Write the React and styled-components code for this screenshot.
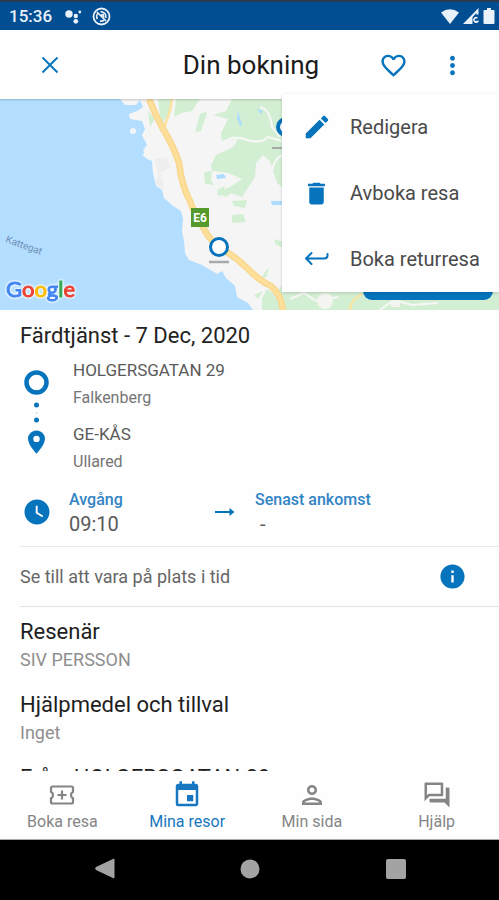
import React from "react";
import styled, { createGlobalStyle } from "styled-components";
import {
  MdEdit,
  MdDelete,
  MdFavoriteBorder,
  MdMoreVert,
  MdInfo,
  MdWatchLater,
  MdEvent,
  MdOutlinePerson,
  MdOutlineQuestionAnswer,
} from "react-icons/md";

const blue = "#0673bd";

const GlobalStyle = createGlobalStyle`
  * { box-sizing: border-box; }
  body { margin: 0; background: #fefefe; font-family: Roboto, "Noto Sans", sans-serif; }
  h1, h2, h3, p, dl, dd, dt, ul, ol { margin: 0; padding: 0; }
  ul, ol { list-style: none; }
  button { border: 0; padding: 0; background: none; font: inherit; color: inherit; cursor: pointer; }
  svg { display: block; }
`;

const Screen = styled.div`
  display: flex;
  flex-direction: column;
  height: 100vh;
  background: #fefefe;
  color: #222;
`;

const StatusBar = styled.div`
  flex: none;
  display: flex;
  align-items: center;
  gap: 13px;
  height: 30px;
  padding: 0 4px 0 9px;
  border-top: 2px solid #2b3a50;
  background: #024e93;
  color: #e9f1fa;
`;

const Clock = styled.time`
  font-size: 17px;
  font-weight: 500;
`;

const StatusIcons = styled.div`
  display: flex;
  align-items: center;
  gap: ${(p) => p.$gap}px;
  margin-left: ${(p) => (p.$end ? "auto" : "0")};
`;

const AppBar = styled.header`
  flex: none;
  position: relative;
  z-index: 2;
  display: grid;
  grid-template-columns: 1fr auto 1fr;
  align-items: center;
  height: 69px;
  padding: 1px 27px 0 30px;
  background: #fefefe;
  box-shadow: 0 1px 2px rgba(0, 0, 0, 0.2);
`;

const Title = styled.h1`
  font-size: 26px;
  line-height: 32px;
  font-weight: 400;
  color: #1b1b1b;
`;

const BarActions = styled.div`
  display: flex;
  justify-content: flex-end;
  gap: 19px;
`;

const IconButton = styled.button`
  display: grid;
  place-items: center;
  width: 40px;
  height: 40px;
  color: ${blue};
`;

const Menu = styled.ul`
  position: absolute;
  top: 64px;
  right: 0;
  width: 217px;
  background: #fefefe;
  box-shadow: 0 1px 3px rgba(0, 0, 0, 0.16);
`;

const MenuItem = styled.button`
  display: grid;
  grid-template-columns: 35px 1fr;
  align-items: center;
  gap: 16px;
  width: 100%;
  height: 66px;
  padding-left: 17px;
  font-size: 20px;
  text-align: left;
  white-space: nowrap;
  color: #4a4a4a;

  svg {
    justify-self: center;
    color: ${blue};
  }
`;

const Content = styled.main`
  flex: 1;
  min-height: 0;
  overflow: hidden;
`;

const MapPanel = styled.section`
  position: relative;
  height: 211px;
  overflow: hidden;
  background: #f5f5f5;
`;

const MapArt = styled.svg`
  width: 100%;
  height: 100%;
`;

const MapLogo = styled.div`
  position: absolute;
  left: 6px;
  bottom: 6px;
  font-family: Lato, sans-serif;
  font-size: 22px;
  line-height: 30px;
  font-weight: 400;
  -webkit-text-stroke: 1px currentColor;
  filter: drop-shadow(0 0 1px #fff) drop-shadow(0 0 1px #fff);
`;

const Letter = styled.span`
  color: ${(p) => p.$color};
`;

const MapButton = styled.button`
  position: absolute;
  right: 6px;
  bottom: 10px;
  width: 130px;
  height: 40px;
  border-radius: 9px;
  background: ${blue};
`;

const Details = styled.div`
  padding: 12px 0 0 20px;
`;

const TripTitle = styled.h2`
  font-size: 22px;
  line-height: 28px;
  font-weight: 400;
  color: #222;
`;

const Route = styled.div`
  display: grid;
  grid-template-columns: 33px 1fr;
  column-gap: 20px;
  padding-top: 7px;
`;

const RouteMarks = styled.div`
  display: flex;
  flex-direction: column;
  align-items: center;
  padding-top: 13px;
  color: ${blue};
`;

const Stops = styled.ol`
  display: grid;
  gap: 10px;
`;

const Street = styled.p`
  font-size: 17px;
  line-height: 27px;
  color: #5a5a5a;
`;

const Town = styled.p`
  font-size: 16px;
  line-height: 27px;
  color: #757575;
`;

const Times = styled.div`
  display: grid;
  grid-template-columns: 33px 130px 24px 1fr;
  align-items: center;
  padding: 13px 0 10px;
  column-gap: 16px;
  border-bottom: 1px solid #e9e9e9;
  color: ${blue};
`;

const ClockMark = styled(MdWatchLater)`
  justify-self: center;
`;

const TimeLabel = styled.dt`
  font-size: 16px;
  line-height: 24px;
  font-weight: 500;
  color: #3284c4;
`;

const TimeValue = styled.dd`
  font-size: 20px;
  line-height: 24px;
  color: #5a5a5a;
  padding-left: ${(p) => (p.$empty ? 5 : 0)}px;
`;

const Notice = styled.div`
  display: flex;
  align-items: center;
  justify-content: space-between;
  height: 60px;
  padding-right: 27px;
  border-bottom: 1px solid #e4e4e4;
  font-size: 18px;
  color: #666;
`;

const Facts = styled.div`
  display: grid;
  gap: 18px;
  padding-top: 11px;
`;

const FactTitle = styled.h3`
  font-size: 22px;
  line-height: 28px;
  font-weight: 400;
  color: #1e1e1e;
`;

const FactText = styled.p`
  font-size: 18px;
  line-height: 27px;
  color: #8f8f8f;
`;

const TabBar = styled.nav`
  flex: none;
  display: grid;
  grid-template-columns: repeat(4, 1fr);
  height: 69px;
  background: #fefefe;
  border-bottom: 1px solid #aaa;
`;

const Tab = styled.button`
  display: flex;
  flex-direction: column;
  align-items: center;
  gap: 2px;
  padding-top: 9px;
  font-size: 16px;
  line-height: 20px;
  color: ${(p) => (p.$active ? "#1677c0" : "#858585")};
`;

const SystemBar = styled.div`
  flex: none;
  display: grid;
  grid-template-columns: repeat(3, 1fr);
  height: 60px;
  padding: 0 30px 0 32px;
  background: #000;
`;

const SystemButton = styled.button`
  display: grid;
  place-items: center;
  padding-bottom: 3px;
  color: #a3a3a3;
`;

const CloseIcon = () => (
  <svg width="18" height="18" viewBox="0 0 18 18" fill="none" stroke="currentColor" strokeWidth="1.9">
    <path d="M1.500 1.500l15 15M16.500 1.500l-15 15" />
  </svg>
);

const ReturnIcon = () => (
  <svg width="25" height="18" viewBox="0 0 25 18" fill="none" stroke="currentColor" strokeWidth="2" strokeLinecap="round" strokeLinejoin="round">
    <path d="M7.500 3L2 8.500l5.500 5.500M2 8.500h18q3.500 0 3.500-3V4" />
  </svg>
);

const ArrowIcon = () => (
  <svg width="20" height="10" viewBox="0 0 20 10">
    <path d="M0 5h15" stroke="currentColor" strokeWidth="2" />
    <path d="M14.500 1L19.500 5l-5 4z" fill="currentColor" />
  </svg>
);

const TicketIcon = () => (
  <svg width="30" height="30" viewBox="0 0 30 30" fill="none" stroke="currentColor" strokeWidth="2.200">
    <path d="M5.500 6.500h19q1.500 0 1.500 1.500v3.700a3.700 3.700 0 0 0 0 6.600V22q0 1.500-1.500 1.500h-19Q4 23.500 4 22v-3.700a3.700 3.700 0 0 0 0-6.600V8q0-1.500 1.500-1.500z" />
    <path d="M15 10.500v9M10.500 15h9" />
  </svg>
);

const RouteIcon = () => (
  <svg width="25" height="84" viewBox="0 0 25 84">
    <circle cx="12.500" cy="12.500" r="10" fill="none" stroke="currentColor" strokeWidth="4.500" />
    <circle cx="12.500" cy="35" r="2.500" fill="currentColor" />
    <circle cx="12.500" cy="43" r="0.800" fill="currentColor" opacity="0.4" />
    <circle cx="12.500" cy="50" r="2.500" fill="currentColor" />
    <path d="M12.500 60.500c-4.700 0-8.500 3.700-8.500 8.300 0 6 8.500 15 8.500 15s8.500-9 8.500-15c0-4.600-3.800-8.300-8.500-8.300zm0 5.200a3.200 3.200 0 1 1 0 6.400 3.200 3.200 0 0 1 0-6.400z" fill="currentColor" />
  </svg>
);

const AssistantIcon = () => (
  <svg width="17" height="15" viewBox="0 0 17 15" fill="currentColor">
    <circle cx="4" cy="5" r="3.700" />
    <circle cx="10.800" cy="7" r="2.200" />
    <circle cx="14.800" cy="3" r="1.400" />
    <circle cx="10.800" cy="12.300" r="2.400" />
  </svg>
);

const SyncOffIcon = () => (
  <svg width="19" height="19" viewBox="0 0 19 19" fill="none" stroke="currentColor">
    <circle cx="9.500" cy="9.500" r="8" strokeWidth="1.800" />
    <path d="M5.500 12a4.600 4.600 0 0 1 1-6.200M8.500 5a4.700 4.700 0 0 1 5.300 6M12 13.300a4.700 4.700 0 0 1-4 .6M5 5l9 9M8 8.500l3-1 1 3" strokeWidth="1.700" />
  </svg>
);

const WifiIcon = () => (
  <svg width="18" height="15" viewBox="0 0 18 15" fill="currentColor">
    <path d="M0 3.500Q9-3 18 3.500L9 15z" />
  </svg>
);

const SignalIcon = () => (
  <svg width="16" height="16" viewBox="0 0 16 16" fill="currentColor">
    <path d="M0 16L15.500 0v6.500h-2.200V5L9.500 9.200V16z" />
    <path d="M14.500 10.200a2.200 2.200 0 1 0 .3 3.200h-2" fill="none" stroke="currentColor" strokeWidth="1.500" />
  </svg>
);

const BatteryIcon = () => (
  <svg width="12" height="16" viewBox="0 0 12 16" fill="currentColor">
    <path d="M4 0h4v2h2.500q1 0 1 1v12q0 1-1 1h-9q-1 0-1-1V3q0-1 1-1H4z" />
  </svg>
);

const highway = "M149 0q6 15 13 28 12 20 17 36 3 24 11 38 4 12 14 28 6 12 18 20 14 8 26 20 12 12 23 17 10 8 12 24";

const MapDrawing = () => (
  <MapArt viewBox="0 0 499 211" preserveAspectRatio="xMinYMid slice" aria-hidden="true">
    <rect width="499" height="211" fill="#f5f5f5" />
    <g fill="#d3efd3">
      <path d="M158 0h14l-4 16-7 10zM148 12l7 8-5 8z" />
      <path d="M176 0h24l-8 12-10 2-8 4z" />
      <path d="M205 13l-5 2-5 18 6-1 6-18z" />
      <path d="M213 16L226 12 232 0H282V88L277 84 270 62 263 56 256 64 255 78 242 98 231 94 226 98 217 93 230 88 242 80 228 74 212 72 211 66 216 56 233 48 238 40 222 42 221 34 228 20z" />
      <path d="M204 73l8-1-1 9 3 5-9-1zM217 91l8-4-2 9-5 1zM232 102l15-1-2 8-11-2zM232 116l11-1 3 8-14 1zM274 140l10 3v6l-8-3zM264 174l5-5-2 8-6 5zM254 196l9-4-5 8z" />
      <path d="M262 211v-12l5-9 8 5 8-10h216v26z" />
    </g>
    <g fill="none" stroke="#f7f7f7" strokeWidth="2">
      <path d="M222 44q10-8 22-4 16 6 24-2l14 4M260 8q10 2 12 20l8 10M272 72q2-12 10-16" />
      <path d="M290 200l14-6 12 8 22-4M380 211l14-10 18 5 26-2" />
    </g>
    <circle cx="325" cy="202" r="8" fill="#f4f4f0" />
    <path d="M391 208h9v-5h-9z" fill="#f4f4f0" />
    <path d="M238 12l4 14-2 1-3-8zM257 10l6 2-2 3zM216 76l8-1 2 4-9 1zM271 102h11v4h-10z" fill="#acdcff" />
    <path
      d="M0 0H120L125 6 136 6 140 1 143 8 137 12 129 15 130 20 142 22 145 30 142 36 147 46 143 51 147 60 152 62 153 74 156 87 162 91 164 99 173 107 181 112 183 120 182 132 184 142 185 154 189 161 202 166 217 175 222 172 226 179 235 187 237 198 248 204 253 211H0z"
      fill="#b3deff"
    />
    <circle cx="133" cy="32" r="3" fill="#f5f5f5" />
    <path d="M142 56l5-4 6 3-5 5z" fill="#f5f5f5" />
    <path d="M155 60l12-2 3 10-10 6 4 12-2 5-6-6 2-10z" fill="#eeeeef" />
    <path d="M172 0l-2 12-6 17" fill="none" stroke="#fbe3a0" strokeWidth="2.500" />
    <path d="M350 211q0-10 12-16" fill="none" stroke="#fbe3a0" strokeWidth="2.500" />
    <path d={highway} fill="none" stroke="#f8d58a" strokeWidth="6.500" />
    <path d={highway} fill="none" stroke="#fddf9a" strokeWidth="4" />
    <rect x="191" y="109" width="18" height="19" fill="#559a2c" />
    <text x="200" y="123" textAnchor="middle" fontFamily="Roboto, sans-serif" fontSize="12" fontWeight="700" fill="#fff">E6</text>
    <path d="M209 163h20" stroke="#a9a9a9" strokeWidth="2.500" />
    <circle cx="219" cy="148" r="8.500" fill="#fff" stroke={blue} strokeWidth="3" />
    <path d="M272 49h12" stroke="#a9a9a9" strokeWidth="2" />
    <circle cx="286" cy="28" r="8" fill="#fff" stroke={blue} strokeWidth="4" />
    <text x="5" y="143" transform="rotate(20 5 143)" fontFamily="Roboto, sans-serif" fontSize="10" fill="#6f8fb8">Kattegat</text>
  </MapArt>
);

const menuItems = [
  { label: "Redigera", icon: <MdEdit size={30} /> },
  { label: "Avboka resa", icon: <MdDelete size={29} /> },
  { label: "Boka returresa", icon: <ReturnIcon /> },
];

const logoLetters = [
  ["G", "#4285f4"],
  ["o", "#ea4335"],
  ["o", "#fbbc05"],
  ["g", "#4285f4"],
  ["l", "#34a853"],
  ["e", "#ea4335"],
];

const stops = [
  { street: "HOLGERSGATAN 29", town: "Falkenberg" },
  { street: "GE-KÅS", town: "Ullared" },
];

const facts = [
  { title: "Resenär", text: "SIV PERSSON" },
  { title: "Hjälpmedel och tillval", text: "Inget" },
  { title: "Från: HOLGERSGATAN 29" },
];

const tabs = [
  { label: "Boka resa", icon: <TicketIcon /> },
  { label: "Mina resor", icon: <MdEvent size={30} />, active: true },
  { label: "Min sida", icon: <MdOutlinePerson size={30} /> },
  { label: "Hjälp", icon: <MdOutlineQuestionAnswer size={30} /> },
];

export default function App() {
  return (
    <Screen>
      <GlobalStyle />
      <StatusBar>
        <Clock>15:36</Clock>
        <StatusIcons $gap={10}>
          <AssistantIcon />
          <SyncOffIcon />
        </StatusIcons>
        <StatusIcons $gap={4} $end>
          <WifiIcon />
          <SignalIcon />
          <BatteryIcon />
        </StatusIcons>
      </StatusBar>

      <AppBar>
        <IconButton aria-label="Stäng">
          <CloseIcon />
        </IconButton>
        <Title>Din bokning</Title>
        <BarActions>
          <IconButton aria-label="Favorit">
            <MdFavoriteBorder size={29} />
          </IconButton>
          <IconButton aria-label="Meny" aria-expanded="true">
            <MdMoreVert size={29} />
          </IconButton>
        </BarActions>
        <Menu>
          {menuItems.map((item) => (
            <li key={item.label}>
              <MenuItem>
                {item.icon}
                {item.label}
              </MenuItem>
            </li>
          ))}
        </Menu>
      </AppBar>

      <Content>
        <MapPanel>
          <MapDrawing />
          <MapLogo>
            {logoLetters.map(([letter, color], i) => (
              <Letter key={i} $color={color}>{letter}</Letter>
            ))}
          </MapLogo>
          <MapButton aria-label="Karta" />
        </MapPanel>

        <Details>
          <TripTitle>Färdtjänst - 7 Dec, 2020</TripTitle>
          <Route>
            <RouteMarks>
              <RouteIcon />
            </RouteMarks>
            <Stops>
              {stops.map((stop) => (
                <li key={stop.street}>
                  <Street>{stop.street}</Street>
                  <Town>{stop.town}</Town>
                </li>
              ))}
            </Stops>
          </Route>
          <Times>
            <ClockMark size={30} />
            <dl>
              <TimeLabel>Avgång</TimeLabel>
              <TimeValue>09:10</TimeValue>
            </dl>
            <ArrowIcon />
            <dl>
              <TimeLabel>Senast ankomst</TimeLabel>
              <TimeValue $empty>-</TimeValue>
            </dl>
          </Times>
          <Notice>
            Se till att vara på plats i tid
            <IconButton aria-label="Information">
              <MdInfo size={29} />
            </IconButton>
          </Notice>
          <Facts>
            {facts.map((fact) => (
              <section key={fact.title}>
                <FactTitle>{fact.title}</FactTitle>
                {fact.text && <FactText>{fact.text}</FactText>}
              </section>
            ))}
          </Facts>
        </Details>
      </Content>

      <TabBar>
        {tabs.map((tab) => (
          <Tab key={tab.label} $active={tab.active} aria-current={tab.active ? "page" : undefined}>
            {tab.icon}
            {tab.label}
          </Tab>
        ))}
      </TabBar>

      <SystemBar>
        <SystemButton aria-label="Tillbaka">
          <svg width="20" height="21" viewBox="0 0 20 21" fill="currentColor">
            <path d="M19 1v19L1 11.500q-1-1 0-2z" stroke="currentColor" strokeLinejoin="round" />
          </svg>
        </SystemButton>
        <SystemButton aria-label="Hem">
          <svg width="20" height="20" viewBox="0 0 20 20" fill="currentColor">
            <circle cx="10" cy="10" r="9.500" />
          </svg>
        </SystemButton>
        <SystemButton aria-label="Översikt">
          <svg width="20" height="20" viewBox="0 0 20 20" fill="currentColor">
            <rect width="20" height="20" rx="2" />
          </svg>
        </SystemButton>
      </SystemBar>
    </Screen>
  );
}
